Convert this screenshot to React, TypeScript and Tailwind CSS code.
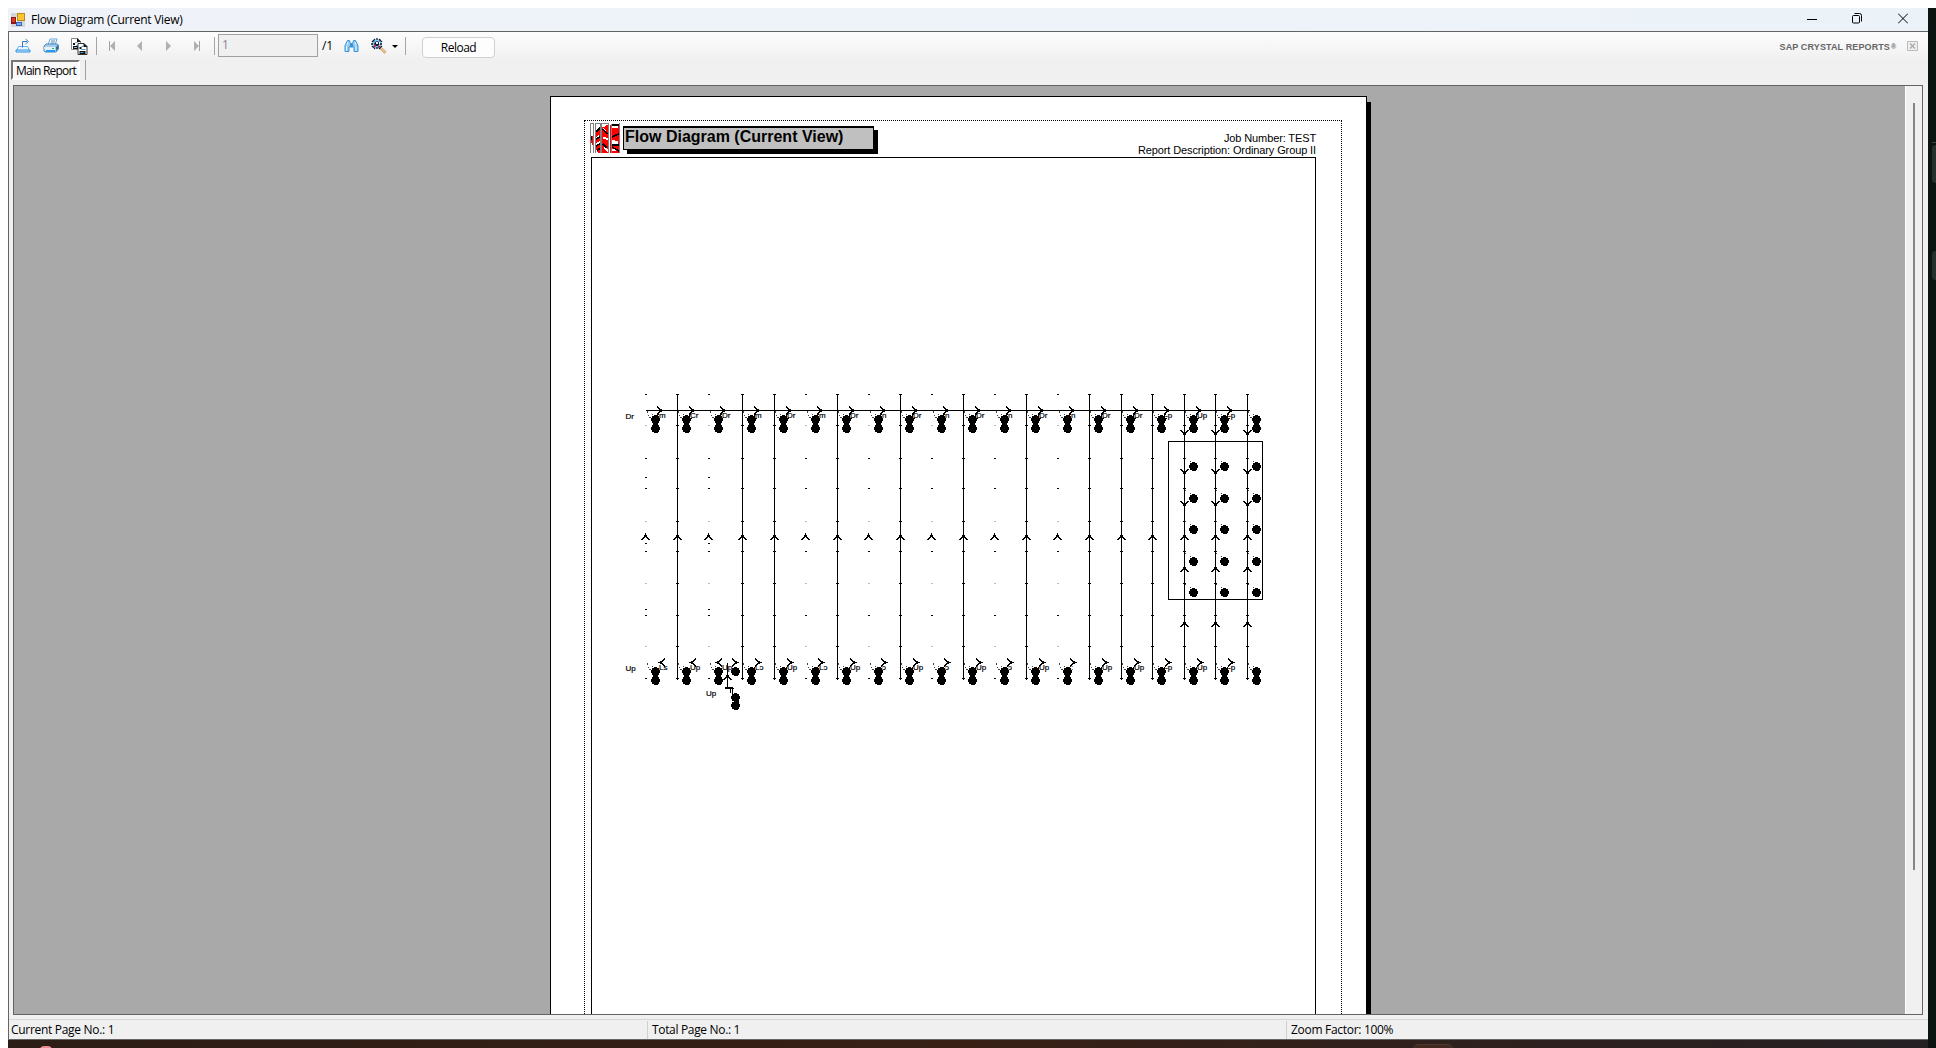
import React from "react";

const COLUMNS = [646, 677, 709, 742, 774, 806, 837, 869, 900, 932, 963, 995, 1026, 1058, 1089, 1121, 1152, 1184, 1215, 1247];
const SOLID = [1, 3, 4, 6, 8, 10, 12, 14, 15, 16, 17, 18, 19];
const TICKS = [394, 425, 458, 488, 521, 551, 583, 615, 646, 678];
const TOP_LABELS = ["m", "Cr", "Dr", "m", "Dr", "m", "Dr", "n", "Dr", "n", "Dr", "n", "Dr", "n", "Dr", "Dr", "-p", "Up", "-p", ""];
const BOTTOM_LABELS = ["Ls", "Up", "Up", "Lɔ", "Up", "Lɔ", "Up", "ɔ", "Up", "ɔ", "Up", "ɔ", "Up", ":", "Up", "Up", "-p", "Up", "-p", ""];

function Dot({ x, y }: { x: number; y: number }) {
  return <path d={`M${x - 2} ${y - 4}h3v1h2v2h1v3h-1v2h-1v1h-4v-1h-2v-2h-1v-3h1v-2h2z`} />;
}

function Head({ x, y, dir }: { x: number; y: number; dir: number }) {
  return (
    <path
      transform={`translate(${x + 0.5} ${y + 0.5}) rotate(${dir})`}
      d="M-.5 -.5h1v2h1v2h1v1h1v1h1v1h-2v-1h-1v-1h-1v-1h-1v1h-1v1h-1v1h-2v-1h1v-1h1v-1h1v-2h1z"
    />
  );
}

function Leader({ x, y, dx, dy }: { x: number; y: number; dx: number; dy: number }) {
  return <path d={`M${x} ${y}l${dx} ${dy}`} fill="none" stroke="#444" strokeWidth="1" strokeDasharray="1 2" />;
}

function SmallLabel({ x, y, children }: { x: number; y: number; children: string }) {
  return (
    <text x={x} y={y} fontSize="8" fontFamily="Liberation Sans, sans-serif" stroke="#000" strokeWidth=".2">
      {children}
    </text>
  );
}

function FlowDiagram() {
  return (
    <svg className="block h-[856px] w-[723px] shrink-0" viewBox="592 158 723 856" shapeRendering="crispEdges">
      <rect x="646" y="410" width="604" height="1" />
      {SOLID.map((i) => (
        <rect key={i} x={COLUMNS[i]} y="394" width="1" height="286" />
      ))}
      {COLUMNS.map((x, i) => {
        const solid = SOLID.includes(i);
        const cx = solid ? x : x - 1;
        const dotX = i < 3 ? x + 9 : cx + 9 + (solid ? 0 : 1);
        return (
          <g key={x}>
            {TICKS.map((y, k) => (
              <rect key={y} x={x - 1} y={y} width={solid ? 3 : 2} height="1" fill={!solid && [1, 4, 6, 8].includes(k) ? "#bbb" : "#000"} />
            ))}
            {(i === 0 || i === 2) && [477, 543, 609].map((y) => <rect key={y} x={x - 1} y={y} width="2" height="1" />)}
            <Leader x={x + 1} y={411} dx={8} dy={6} />
            <Leader x={x + 1} y={412} dx={5} dy={9} />
            <Leader x={x + 1} y={663} dx={8} dy={6} />
            <Leader x={x + 1} y={664} dx={5} dy={9} />
            {[419, 428, 671, 680].map((y) => (
              <Dot key={y} x={dotX + 0.5} y={y} />
            ))}
            <rect x={dotX - 2} y="421" width="5" height="5" />
            <rect x={dotX - 2} y="673" width="5" height="5" />
            {i < 19 && (
              <g>
                <Head x={cx + 18} y={410} dir={90} />
                <path d={`M${cx + 14} 414l-4 4h5`} fill="none" stroke="#000" />
                {i > 2 && <path d={`M${cx + 14} 666l-4 4h4`} fill="none" stroke="#000" />}
                <SmallLabel x={x + 13} y={418}>{TOP_LABELS[i]}</SmallLabel>
                <SmallLabel x={x + 13} y={670}>{BOTTOM_LABELS[i]}</SmallLabel>
              </g>
            )}
            {i < 2 && <Head x={x + 12} y={662} dir={-90} />}
            {i > 2 && i < 19 && <Head x={cx + 19} y={662} dir={90} />}
            {i < 17 && <Head x={cx} y={533} dir={0} />}
            {i >= 17 && (
              <g>
                {[533, 565, 620].map((y) => <Head key={y} x={x} y={y} dir={0} />)}
                {[436, 475, 507].map((y) => <Head key={y} x={x} y={y} dir={180} />)}
                {[466, 498, 529, 561, 592].map((y) => (
                  <g key={y}>
                    <Dot x={x + 9.5} y={y} />
                    <Leader x={x + 1} y={y - 8} dx={8} dy={5} />
                  </g>
                ))}
              </g>
            )}
          </g>
        );
      })}
      <Head x={715} y={662} dir={-90} />
      <Head x={738} y={662} dir={90} />
      <Head x={727} y={673} dir={0} />
      <path d="M727.5 663V688.5H734M730.5 688v5M732.5 688v7" fill="none" stroke="#000" />
      <rect x="725" y="687" width="8" height="2" />
      <Dot x={736} y={671} />
      <Dot x={736} y={697} />
      <Dot x={736} y={705} />
      <rect x="734" y="699" width="5" height="5" />
      <SmallLabel x={625.5} y={419}>Dr</SmallLabel>
      <SmallLabel x={625.5} y={671}>Up</SmallLabel>
      <SmallLabel x={706} y={696}>Up</SmallLabel>
      <rect x="1168.5" y="441.5" width="94" height="158" fill="none" stroke="#000" />
    </svg>
  );
}

function FormIcon() {
  return (
    <svg className="size-[14px]" viewBox="0 0 14 14">
      <rect width="14" height="14" fill="#d5d5d5" />
      <rect x="6" y="0" width="8" height="8" fill="#b98a1c" />
      <rect x="7" y="1" width="6" height="6" fill="#fbc531" />
      <rect x="0" y="4" width="5" height="7" fill="#8d1a10" />
      <rect x="1" y="5" width="3" height="4" fill="#e23b25" />
      <rect x="5" y="9" width="6" height="4" fill="#2f66c9" />
      <rect x="6" y="10" width="4" height="2" fill="#7ba8ef" />
      <rect x="5" y="4" width="1" height="5" fill="#fff" />
    </svg>
  );
}

function ExportIcon() {
  return (
    <svg className="h-4 w-4" viewBox="0 0 16 16" fill="none">
      <path d="M3.5 8.5h9l2 4h-13z" fill="#eef6fd" stroke="#69b4ee" />
      <path d="M1 12h14v2H1z" fill="#c9e6fb" stroke="#2a93e8" />
      <path d="M7.5 9.500V3.500H12" stroke="#3b78b4" />
      <path d="M10.500 1L13.500 3.500L10.500 6" stroke="#3f8ed0" />
    </svg>
  );
}

function PrintIcon() {
  return (
    <svg className="h-4 w-4" viewBox="0 0 16 16">
      <path d="M5 7L7 1h7l-2 6z" fill="#fff" stroke="#65a9e0" />
      <path d="M8 3h4M7.500 5h4" stroke="#5d86ad" />
      <path d="M1 8l2-2h11l1.500 1v4L13 14H2l-1-1.500z" fill="#a8cdec" stroke="#4588bd" />
      <path d="M1 9h11v4H2z" fill="#e4f1fb" />
      <path d="M3 13h9" stroke="#259af0" strokeWidth="2" />
      <path d="M13 9l2-2v4l-2 2z" fill="#356f9c" />
      <path d="M9 10h2v1H9z" fill="#2fb14b" />
    </svg>
  );
}

function CopyIcon() {
  return (
    <svg className="h-[17px] w-[17px]" viewBox="0 0 17 17">
      <g>
        <path d="M.5.5h6l3 3v8h-9z" fill="#fff" stroke="#888" />
        <path d="M6 0l4 4H6zM2 5h2v2H2zM2 8h5v3H2z" fill="#111" />
        <path d="M4 4h3v1H4zM5 7h3v1H5zM3 9h3v1H3z" fill="#7fb5e0" />
      </g>
      <g transform="translate(6.500 5)">
        <path d="M.5.5h6l3 3v8h-9z" fill="#fff" stroke="#333" />
        <path d="M6 0l4 4H6zM2 4h2v2H2zM2 8h6v3H2z" fill="#111" />
        <path d="M4 3h2v1H4zM4 6h4v1H4zM3 9h3v1H3z" fill="#4d9bd9" />
      </g>
    </svg>
  );
}

function FindIcon() {
  return (
    <svg className="h-[14px] w-[15px]" viewBox="0 0 15 14">
      <path d="M3.500 1.500h2l1 3h2l1-3h2l2.500 5v6h-4V8h-5v4.500H1v-6z" fill="#8ccbf6" stroke="#3c93d8" />
      <path d="M2.500 7v5M12 7v5M4 3l-1 3M11 3l1 3" stroke="#e9f7ff" />
      <path d="M6 5h3v3H6z" fill="#4a8dc6" />
    </svg>
  );
}

function ZoomIcon() {
  return (
    <svg className="h-4 w-4" viewBox="0 0 16 16">
      <path d="M10 9l5 4.500-1.500 2L9 11z" fill="#f0c08a" stroke="#b98a5a" strokeWidth=".6" />
      <circle cx="6" cy="6" r="4.500" fill="#86c6ef" />
      <path d="M6 0v12M0 6h12M2 2l8 8M10 2l-8 8M1 4l3-3M8 11l3-3M8 1l3 3M1 8l3 3" stroke="#0d1c35" strokeWidth="1.300" strokeDasharray="2 1" />
      <path d="M3 7h2v2H3zM7 7h1v3H7z" fill="#d0305a" />
      <path d="M5 4h2v2H5zM8 4h1v2H8z" fill="#e9f8ff" />
    </svg>
  );
}

function NavIcon({ flip, bar }: { flip?: boolean; bar?: boolean }) {
  return (
    <svg className={flip ? "h-[10px] w-[8px] -scale-x-100" : "h-[10px] w-[8px]"} viewBox="0 0 8 10">
      {bar && <rect x="1" y="0" width="1" height="10" fill="#a5a5a5" />}
      <path d={bar ? "M7 0v10L2 5z" : "M6 0v10L1 5z"} fill="#b0b0b0" />
    </svg>
  );
}

function Logo() {
  return (
    <svg className="h-[30px] w-[31px] shrink-0" viewBox="0 0 31 30" shapeRendering="crispEdges">
      <path d="M6 9l4-5h4l3-2h12v28H8l-3-7zM1 15l2-3v11l-2-4z" fill="#f00" />
      <path d="M6 14l3-2 1 2-3 2zM13 4l3 4v2l-3-3zM6 20l4-2v2l-4 3zM13 14l5 1v2l-5-1zM14 23l4 4v2l-4-3zM22 3h6v2h-6zM22 17l6 1v3h-6zM22 26h4v2h-4z" fill="#fff" />
      <path d="M6 9l3-3 2-2M6 16l4-2M6 23l5-3M7 27l4-2M13 6l4 5M13 21l4 4M21 2h8M22 14l4-2 3-1M22 22h7M22 24l7 4M1 13v4" stroke="#000" strokeWidth="1.500" fill="none" />
      <path d="M.5 30V.5h3V30M5.500 30V.5h5V30M11.500 30V.5h7V30M21.500 30V.5M29.500 0v30" fill="none" stroke="#808080" />
      <path d="M4 0h1v30H4zM19 0h1v30h-1z" fill="#fff" />
    </svg>
  );
}

const Divider = () => <div className="h-[18px] w-px bg-[#a6a6a6]" />;

export default function App() {
  return (
    <div className="flex h-[1048px] w-[1936px] overflow-hidden bg-white pt-2 pl-2 font-['Open_Sans',sans-serif] text-[12px] text-black">
      <div className="flex w-[1920px] shrink-0 flex-col">
        <header className="flex h-[23px] shrink-0 items-center bg-gradient-to-r from-[#eff3f9] to-[#ecf3f8] pl-[3px]">
          <FormIcon />
          <span className="ml-[6px] whitespace-nowrap tracking-[-0.28px]">Flow Diagram (Current View)</span>
          <div className="mr-[20px] ml-auto flex items-center pb-[3px]">
            <svg className="h-[11px] w-[10px]" viewBox="0 0 10 11"><path d="M0 6.500h10" stroke="#000" /></svg>
            <svg className="ml-[35px] h-[11px] w-[10px]" viewBox="0 0 10 11" fill="none" stroke="#000"><rect x=".5" y="2.500" width="7" height="7.500" rx="1" /><path d="M2.500 .5h5a2 2 0 0 1 2 2v6" /></svg>
            <svg className="ml-[36px] h-[11px] w-[10px]" viewBox="0 0 10 11"><path d="M0 .5l10 10M10 .5l-10 10" stroke="#000" /></svg>
          </div>
        </header>

        <main className="flex h-[1009px] shrink-0 flex-col border-t border-b border-l border-[#646464] bg-[#f0f0f0]">
          <div className="flex h-[28px] shrink-0 items-center bg-gradient-to-b from-[#fdfdfd] to-[#f0f0f0] pl-[6px]">
            <ExportIcon />
            <div className="ml-[12px]"><PrintIcon /></div>
            <div className="ml-[12px]"><CopyIcon /></div>
            <div className="mr-[11px] ml-[8px]"><Divider /></div>
            <NavIcon bar />
            <div className="ml-[20px]"><NavIcon /></div>
            <div className="ml-[20px]"><NavIcon flip /></div>
            <div className="ml-[21px]"><NavIcon flip bar /></div>
            <div className="mr-[3px] ml-[13px]"><Divider /></div>
            <div className="mb-[2px] flex h-[23px] w-[100px] items-center border border-[#a0a0a0] bg-[#f0f0f0] pl-[3px] text-[#8c8090]">1</div>
            <span className="ml-[4px] w-[11px] tracking-[-0.2px]">/1</span>
            <div className="ml-[11px]"><FindIcon /></div>
            <div className="ml-[12px]"><ZoomIcon /></div>
            <div className="mt-px ml-[5px] border-x-[3px] border-t-[3px] border-x-transparent border-t-black" />
            <div className="ml-[7px]"><Divider /></div>
            <button className="mt-[3px] ml-[16px] h-[21px] w-[73px] rounded-[4px] border border-[#d0d0d0] bg-[#fdfdfd] leading-[18px] tracking-[-0.5px]">Reload</button>
            <span className="mt-[4px] mr-[20px] ml-auto flex font-['Liberation_Sans',sans-serif] text-[9px] font-bold tracking-[0.12px] text-[#666]">SAP CRYSTAL REPORTS<span className="ml-px w-[5px] text-[7px] leading-[11px]">®</span></span>
            <svg className="mr-[10px] -ml-[9px] mb-px h-[10px] w-[11px]" viewBox="0 0 11 10" fill="none"><path d="M.5.5h10v9H.5z" fill="#eee" stroke="#bbb" /><path d="M3 2.500l5 5M8 2.500l-5 5" stroke="#aaa" strokeWidth="1.300" /></svg>
          </div>
          <div className="flex h-[25px] shrink-0 pl-[2px]">
            <div className="flex h-[20px] w-[69px] items-center border-2 border-t-[#757575] border-r-white border-b-white border-l-[#757575] bg-[#f9f9f9] pt-[2px] pl-[3px] tracking-[-0.8px] whitespace-nowrap">Main Report</div>
            <div className="ml-[5px] h-[20px] w-px bg-[#a0a0a0]" />
          </div>

          <div className="ml-[4px] flex h-[930px] w-[1910px] shrink-0 overflow-hidden border border-[#646464] bg-[#a9a9a9]">
            <div className="flex flex-1 overflow-hidden pt-[10px] pl-[536px]">
              <section className="h-[1100px] w-[817px] shrink-0 border border-black bg-white pt-[23px] pl-[33px]">
                <div className="h-[1060px] w-[758px] border border-dotted border-black pt-[2px] pl-[5px]">
                  <div className="flex h-[34px] w-[727px]">
                    <Logo />
                    <h1 className="mt-[3px] ml-[2px] h-[24px] w-[251px] border border-t-2 border-black bg-[#c0c0c0] pl-px font-['Liberation_Sans',sans-serif] text-[16px] leading-[18px] font-bold whitespace-nowrap shadow-[4px_4px_0_#000]">Flow Diagram (Current View)</h1>
                    <div className="mt-[9px] ml-auto pr-px text-right font-['Liberation_Sans',sans-serif] text-[11px] leading-[12px]">
                      <div className="tracking-[-0.12px]">Job Number: TEST</div>
                      <div className="tracking-[-0.11px]">Report Description: Ordinary Group II</div>
                    </div>
                  </div>
                  <div className="ml-px w-[725px] border border-black">
                    <FlowDiagram />
                    <div className="h-[150px]" />
                  </div>
                </div>
              </section>
              <div className="mt-[6px] h-[1100px] w-[4px] shrink-0 bg-black" />
            </div>
            <div className="w-[17px] shrink-0 border-l border-white bg-[#f0f0f0] pt-[17px] pl-[7px]">
              <div className="h-[767px] w-[2px] bg-[#858585]" />
            </div>
          </div>

          <footer className="mt-[4px] flex h-[20px] items-center border-t border-[#d7d7d7] whitespace-nowrap">
            <span className="w-[638px] pl-[2px] tracking-[-0.3px]">Current Page No.: 1</span>
            <span className="w-[639px] border-l border-[#d0d0d0] pl-[4px] tracking-[-0.33px]">Total Page No.: 1</span>
            <span className="border-l border-[#d0d0d0] pl-[4px] tracking-[-0.3px]">Zoom Factor: 100%</span>
          </footer>
        </main>
        <div className="flex h-[8px] shrink-0 bg-gradient-to-r from-[#2b1d15] via-[#382015] to-[#252124] pl-[32px]">
          <div className="mt-[6px] h-[8px] w-[12px] rounded-full bg-[#ee8c94]" />
          <div className="mt-[4px] ml-[1361px] h-[8px] w-[40px] rounded-t-[5px] border border-[#51382e] bg-[#402a21]" />
        </div>
      </div>
      <aside className="flex w-[8px] shrink-0 flex-col bg-[#0b1411] pl-[4px]">
        <div className="mt-[134px] h-px bg-[#3b4541]" />
        <div className="mt-[2px] h-[38px] rounded-l-[4px] bg-[#27302d]" />
        <div className="mt-[68px] h-[29px] rounded-l-[4px] bg-[#27302d]" />
      </aside>
    </div>
  );
}
